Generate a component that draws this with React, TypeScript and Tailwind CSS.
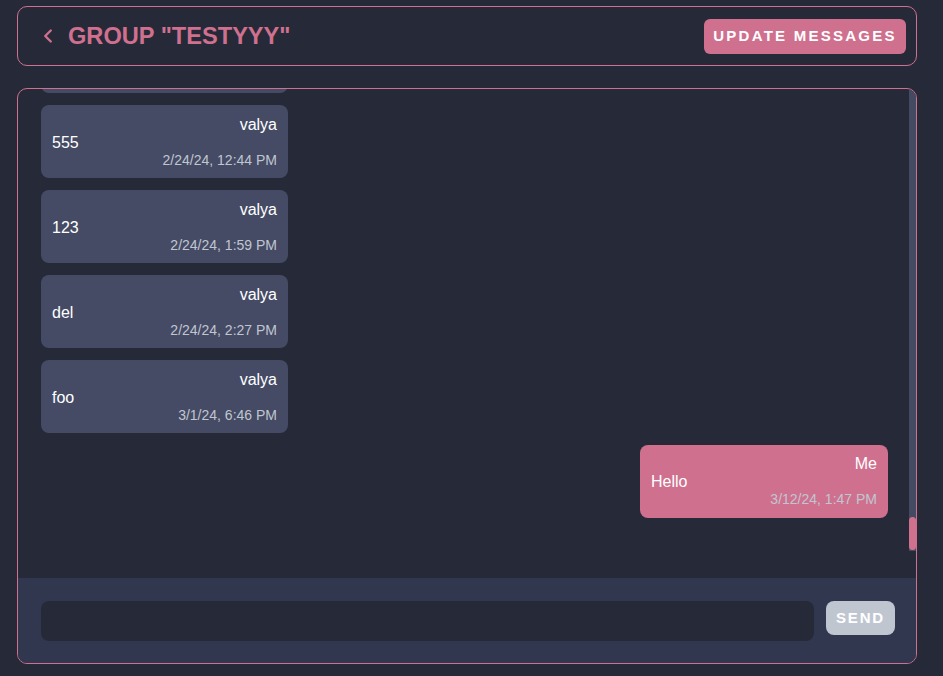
import { ChevronLeft } from 'lucide-react';

type Message = {
	id: number;
	author: string;
	text: string;
	time: string;
	mine?: boolean;
};

const messages: Message[] = [
	{ id: 1, author: 'valya', text: 'test', time: '2/24/24, 12:40 PM' },
	{ id: 2, author: 'valya', text: '555', time: '2/24/24, 12:44 PM' },
	{ id: 3, author: 'valya', text: '123', time: '2/24/24, 1:59 PM' },
	{ id: 4, author: 'valya', text: 'del', time: '2/24/24, 2:27 PM' },
	{ id: 5, author: 'valya', text: 'foo', time: '3/1/24, 6:46 PM' },
	{ id: 6, author: 'Me', text: 'Hello', time: '3/12/24, 1:47 PM', mine: true },
];

function Bubble({ msg }: { msg: Message }) {
	return (
		<div
			className={
				msg.mine
					? 'w-[248px] shrink-0 self-end rounded-lg bg-[#d0708f] px-[11px] pt-[10px] pb-[10px]'
					: 'w-[247px] shrink-0 self-start rounded-lg bg-[#454b65] px-[11px] pt-[11px] pb-[9px]'
			}
		>
			<div className="text-right text-[16px] leading-[18px] text-white">
				{msg.author}
			</div>
			<div className="text-[16px] leading-[18px] text-white">{msg.text}</div>
			<div className="text-right text-[14px] leading-[17px] text-[#c0c6d0]">
				{msg.time}
			</div>
		</div>
	);
}

export default function App() {
	return (
		<div className="h-[676px] overflow-hidden bg-[#262a38] pt-[6px] pl-[17px] font-['Liberation_Sans',Arial,sans-serif]">
			<div className="flex h-[60px] w-[900px] items-center justify-between rounded-[10px] border border-[#d0708f] pr-[10px] pl-[19px]">
				<div className="flex items-center">
					<ChevronLeft
						size={22}
						strokeWidth={2.6}
						className="text-[#d0708f]"
					/>
					<h1 className="ml-[9px] text-[23.6px] leading-[28px] font-bold text-[#d0708f]">
						GROUP "TESTYYY"
					</h1>
				</div>
				<button className="h-[35px] w-[202px] rounded-md bg-[#d0708f] text-[15px] leading-[18px] font-bold tracking-[0.15em] text-white">
					UPDATE MESSAGES
				</button>
			</div>

			<div className="mt-[22px] flex h-[576px] w-[900px] flex-col overflow-hidden rounded-[10px] border border-[#d0708f]">
				<div className="flex min-h-0 flex-1">
					<div className="flex min-w-0 flex-1 flex-col justify-end gap-3 overflow-hidden pr-[21px] pb-[60px] pl-[23px]">
						{messages.map((m) => (
							<Bubble key={m.id} msg={m} />
						))}
					</div>
					<div className="flex h-[462px] w-[7px] flex-col justify-end bg-[#454a63]">
						<div className="mb-[1px] h-[33px] rounded-full bg-[#d0708f]" />
					</div>
				</div>
				<div className="flex h-[85px] shrink-0 items-start gap-3 bg-[#323750] pt-[23px] pr-[21px] pl-[23px]">
					<input
						className="h-[40px] flex-1 rounded-lg bg-[#262a38] px-3 text-white outline-none"
						type="text"
					/>
					<button className="h-[34px] w-[69px] rounded-lg bg-[#c0c6d0] text-[15px] leading-[18px] font-bold tracking-[0.12em] text-white">
						SEND
					</button>
				</div>
			</div>
		</div>
	);
}
